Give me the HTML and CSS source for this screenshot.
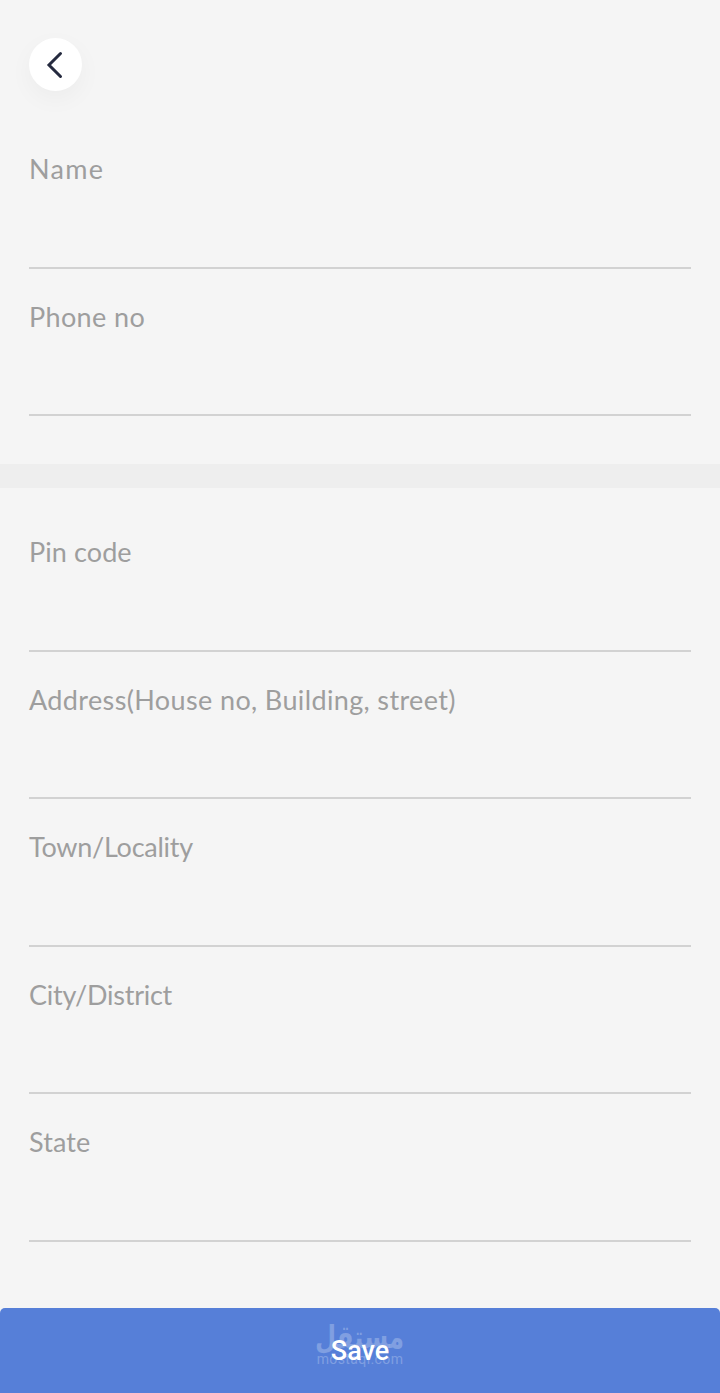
FILE: index.html
```html
<!DOCTYPE html>
<html lang="en">
<head>
<meta charset="utf-8">
<title>Address</title>
<link rel="stylesheet" href="styles.css">
</head>
<body>
<main class="screen">
  <header class="top">
    <button class="back" aria-label="Back">
      <svg class="chevron" width="18" height="28" viewBox="0 0 18 28"><path d="M14.5 2.5 L3 14 L14.5 25.5" fill="none" stroke="#252a3f" stroke-width="3" stroke-linecap="round" stroke-linejoin="miter"/></svg>
    </button>
  </header>
  <section class="group first">
    <div class="field"><span class="label wide">Name</span></div>
    <div class="field"><span class="label">Phone no</span></div>
  </section>
  <div class="divider"></div>
  <section class="group second">
    <div class="field"><span class="label snug">Pin code</span></div>
    <div class="field"><span class="label">Address(House no, Building, street)</span></div>
    <div class="field"><span class="label tight">Town/Locality</span></div>
    <div class="field"><span class="label tight">City/District</span></div>
    <div class="field"><span class="label snug">State</span></div>
  </section>
  <button class="save">
    <span class="mark" aria-hidden="true"><span class="mark-ar">مستقل</span><span class="mark-en">mostaql.com</span></span>
    <span class="save-text">Save</span>
  </button>
</main>
</body>
</html>
```
FILE: styles.css
```css
* { box-sizing: border-box; }
html, body { margin: 0; padding: 0; }
body { background: #f5f5f5; font-family: "Lato", "Liberation Sans", sans-serif; }
.screen { width: 720px; height: 1393px; display: flex; flex-direction: column; background: #f5f5f5; overflow: hidden; }
.top { height: 121px; padding: 38px 0 0 29px; flex: none; }
.back { width: 53px; height: 53px; border: 0; padding: 0 1px 0 0; border-radius: 50%; background: #fff; display: flex; align-items: center; justify-content: center; box-shadow: 0 8px 24px rgba(0,0,0,0.04); }
.group { padding: 0 29px; display: flex; flex-direction: column; flex: none; }
.field { height: 147.5px; border-bottom: 2px solid #d2d2d2; padding-top: 31px; }
.label { display: block; font-size: 27px; line-height: 34px; color: #9e9e9e; letter-spacing: 0.37px; }
.wide { letter-spacing: 1.3px; }
.snug { letter-spacing: 0.1px; }
.tight { letter-spacing: -0.25px; }
.divider { height: 24px; margin-top: 48px; background: #eeeeee; flex: none; }
.second { margin-top: 16px; }
.save { margin-top: auto; height: 85px; border: 0; border-radius: 5px 5px 0 0; background: #567fd8; position: relative; flex: none; display: flex; align-items: center; justify-content: center; padding: 0; }
.save-text { position: relative; font-family: "Roboto", sans-serif; font-weight: 500; font-size: 27px; color: #fff; }
.mark { position: absolute; left: 0; right: 0; top: 14px; display: flex; flex-direction: column; align-items: center; color: rgba(255,255,255,0.25); }
.mark-ar { font-family: "DejaVu Sans", sans-serif; font-weight: 700; font-size: 32px; line-height: 30px; transform: scaleX(0.76); }
.mark-en { font-family: "Roboto", sans-serif; font-size: 14px; line-height: 14px; letter-spacing: 0.4px; }
```
